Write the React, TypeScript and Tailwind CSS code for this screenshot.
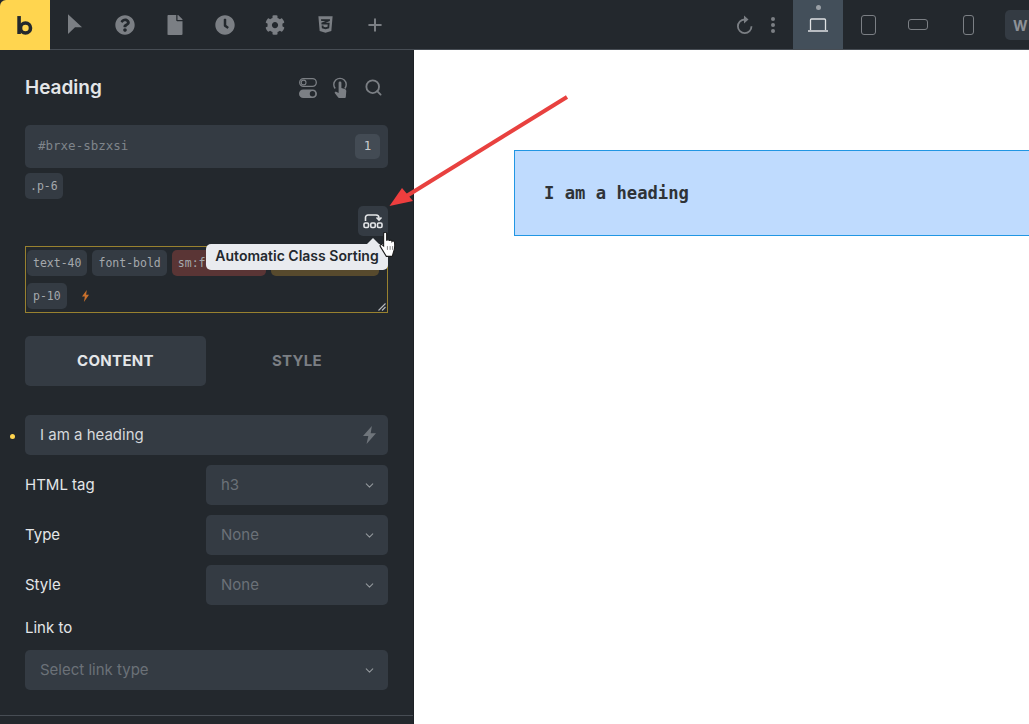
import { ChevronDown, Plus, Search } from 'lucide-react';
import { FaClock, FaCog, FaCss3Alt, FaFile, FaQuestionCircle } from 'react-icons/fa';

const inter = { fontFamily: 'Inter, sans-serif' };

const TopIcon = ({ children }: { children: React.ReactNode }) => (
    <div className="w-[50px] h-[49px] flex items-center justify-center text-[#7b7f84]">{children}</div>
);

const Chip = ({ label, className }: { label: string; className?: string }) => (
    <span className={`h-[26px] px-[6px] pt-[1px] rounded-[5px] flex items-center whitespace-nowrap text-[11.5px] text-[#a4a8ac] font-['DejaVu_Sans_Mono',monospace] ${className ?? 'bg-[#343b43]'}`}>
        {label}
    </span>
);

const SelectRow = ({ label, value }: { label: string; value: string }) => (
    <div className="flex items-center h-10">
        <span className="w-[181px] text-[15px] text-[#e4e6e8]">{label}</span>
        <SelectBox value={value} className="w-[182px]" />
    </div>
);

const SelectBox = ({ value, className }: { value: string; className: string }) => (
    <div className={`h-10 rounded-[5px] bg-[#343b43] flex items-center justify-between pl-[15px] pr-3 ${className}`}>
        <span className="text-[15px] text-[#6b7178]">{value}</span>
        <ChevronDown size={13} strokeWidth={2} className="text-[#92979c]" />
    </div>
);

const Bolt = ({ className }: { className: string }) => (
    <svg viewBox="1.500 0 11 20" preserveAspectRatio="none" className={className} fill="currentColor">
        <path d="M9 0 1.500 11H6L4.500 20 12.500 8H8z" />
    </svg>
);

export default function App() {
    return (
        <div className="relative h-screen w-full overflow-hidden bg-white flex flex-col" style={inter}>
            {/* Top bar */}
            <header className="h-[50px] shrink-0 bg-[#23282d] border-b border-[#474d54] flex items-start">
                <div className="w-[50px] h-[50px] bg-[#ffd54f] rounded-tl-[6px] flex items-center justify-center">
                    <svg viewBox="0 0 18 20" className="w-[17px] h-[19px] text-[#23282d]" fill="none" stroke="currentColor" strokeWidth="3.800">
                        <path d="M2.200 0v19" />
                        <circle cx="9" cy="12.600" r="5.300" />
                    </svg>
                </div>
                <TopIcon>
                    <svg viewBox="0 0 16 22" className="w-[15px] h-[21px]" fill="currentColor"><path d="M0 0 15 14H7.500L0 21z" /></svg>
                </TopIcon>
                <TopIcon><FaQuestionCircle size={20} /></TopIcon>
                <TopIcon><FaFile size={20} /></TopIcon>
                <TopIcon><FaClock size={20} /></TopIcon>
                <TopIcon><FaCog size={20} /></TopIcon>
                <TopIcon><FaCss3Alt size={19} /></TopIcon>
                <TopIcon><Plus size={20} strokeWidth={2.400} /></TopIcon>

                <div className="ml-auto flex items-start">
                    <div className="h-[49px] flex items-center text-[#7b7f84]">
                        <svg viewBox="0 0 18 20" className="w-[18px] h-[20px] mr-[17px]" fill="none" stroke="currentColor" strokeWidth="1.800">
                            <path d="M8.500 4.500a6.800 6.800 0 1 0 7 6.800" />
                            <path d="M8 .5 12.500 4.500 8 8.500z" fill="currentColor" stroke="none" />
                        </svg>
                        <div className="flex flex-col gap-[2px] mr-[18px]">
                            <span className="w-1 h-1 rounded-full bg-[#7b7f84]" />
                            <span className="w-1 h-1 rounded-full bg-[#7b7f84]" />
                            <span className="w-1 h-1 rounded-full bg-[#7b7f84]" />
                        </div>
                    </div>
                    <div className="relative w-[50px] h-[49px] bg-[#434f5a] flex items-center justify-center">
                        <span className="absolute top-[5px] left-[23px] w-[5px] h-[5px] rounded-full bg-[#9aa0a6]" />
                        <svg viewBox="0 0 20 14" className="w-5 h-[14px]" fill="none" stroke="#dfe1e3" strokeWidth="1.300">
                            <path d="M2.500 12V2a1 1 0 0 1 1-1h13a1 1 0 0 1 1 1v10M0 13h20" />
                        </svg>
                    </div>
                    <div className="w-[50px] h-[49px] flex items-center justify-center">
                        <div className="w-[15px] h-[20px] rounded-[3px] border-[1.5px] border-[#7b7f84]" />
                    </div>
                    <div className="w-[50px] h-[49px] flex items-center justify-center">
                        <div className="w-[20px] h-[11px] rounded-[3px] border-[1.5px] border-[#7b7f84]" />
                    </div>
                    <div className="w-[50px] h-[49px] flex items-center justify-center">
                        <div className="w-[11px] h-[20px] rounded-[3px] border-[1.5px] border-[#7b7f84]" />
                    </div>
                    <div className="ml-[12px] mt-[10px] w-[24px] h-[30px] rounded-l-[5px] bg-[#343b43] flex items-center pl-2 overflow-hidden">
                        <span className="text-[14px] font-bold text-[#8d9197]">W</span>
                    </div>
                </div>
            </header>

            <div className="flex-1 flex min-h-0">
                {/* Panel */}
                <aside className="w-[414px] shrink-0 bg-[#23282d] border-r border-[#1d2125] flex flex-col">
                    <div className="px-[25px]">
                        <div className="h-[75px] flex items-center justify-between">
                            <span className="text-[19px] font-semibold text-[#e4e6e8] pt-[2px]">Heading</span>
                            <div className="flex items-center text-[#7b7f84] pr-[5px]">
                                <svg viewBox="0 0 18 20" className="w-[18px] h-[20px] mr-[16px]">
                                    <rect x="0.700" y="0.700" width="16.600" height="7.600" rx="3.800" fill="none" stroke="currentColor" strokeWidth="1.300" />
                                    <circle cx="4.600" cy="4.500" r="2.400" fill="none" stroke="currentColor" strokeWidth="1.100" />
                                    <rect x="0" y="11.500" width="18" height="8.500" rx="4.250" fill="currentColor" />
                                    <circle cx="13.500" cy="15.750" r="2.700" fill="#23282d" />
                                </svg>
                                <svg viewBox="0 0 14 21" className="w-[14px] h-[21px] mr-[17px]" fill="none" stroke="currentColor" strokeWidth="1.400">
                                    <path d="M2.200 11.500A6.200 6.200 0 1 1 11.800 11.500" />
                                    <path fill="currentColor" stroke="none" d="M5.600 5.800a1.400 1.400 0 0 1 2.800 0V11l3.400 1a2 2 0 0 1 1.500 2l-.5 6a1 1 0 0 1-1 1H6a1 1 0 0 1-.8-.4L1.500 15.800l1.200-1.200 2.900 1.500z" />
                                </svg>
                                <Search size={19} strokeWidth={2.300} />
                            </div>
                        </div>

                        <div className="h-[43px] rounded-[5px] bg-[#343b43] flex items-center justify-between pl-[13px] pr-2">
                            <span className="text-[12.500px] text-[#7f858b] font-['DejaVu_Sans_Mono',monospace]">#brxe-sbzxsi</span>
                            <span className="w-[25px] h-[25px] rounded-[5px] bg-[#434b54] flex items-center justify-center text-[12.500px] text-[#c9ccd0] font-['DejaVu_Sans_Mono',monospace]">1</span>
                        </div>

                        <div className="mt-[5px] flex">
                            <Chip label=".p-6" className="bg-[#343b43] !px-[5px]" />
                        </div>

                        <div className="relative mt-[7px] h-[30px] flex justify-end">
                            <div className="w-[30px] h-[30px] rounded-[5px] bg-[#343b43] flex items-center justify-center text-[#e4e6e8]">
                                <svg viewBox="0 0 20 18" className="w-5 h-[18px]" fill="none" stroke="currentColor" strokeWidth="1.600">
                                    <path d="M2.500 9V5.500a2.500 2.500 0 0 1 2.500-2.500h8a3 3 0 0 1 3 3v1" />
                                    <path d="M13.500 5.500 16 8l2.500-2.500" />
                                    <rect x="1" y="11" width="4.500" height="4.500" rx="1.200" />
                                    <rect x="7.750" y="11" width="4.500" height="4.500" rx="1.200" />
                                    <rect x="14.500" y="11" width="4.500" height="4.500" rx="1.200" />
                                </svg>
                            </div>
                            {/* Tooltip */}
                            <div className="absolute z-10 top-[38px] right-0 h-[26px] w-[182px] pb-[3px] rounded-[5px] bg-[#e9ebef] flex items-center justify-center text-[14px] font-semibold text-[#23282d] whitespace-nowrap">
                                Automatic Class Sorting
                                <span className="absolute -top-[6px] right-[9px] w-0 h-0 border-x-[6px] border-x-transparent border-b-[6px] border-b-[#e9ebef]" />
                            </div>
                        </div>

                        <div className="relative mt-[10px] h-[67px] border border-[#98812f] px-[1px] pt-[3px] flex flex-wrap content-start gap-x-[5px] gap-y-[7px]">
                            <Chip label="text-40" />
                            <Chip label="font-bold" />
                            <Chip label="sm:font-medium" className="bg-[#5a3535] w-[94px] overflow-hidden" />
                            <Chip label="md:text-3xl" className="bg-[#574a2d] w-[108px] overflow-hidden" />
                            <Chip label="p-10" />
                            <div className="h-[26px] flex items-center ml-[10px]">
                                <Bolt className="w-[7px] h-[12px] text-[#c9702c]" />
                            </div>
                            <svg viewBox="0 0 8 8" className="absolute right-[1px] bottom-[1px] w-2 h-2" stroke="#b9bcc0" strokeWidth="1.100">
                                <path d="M0.500 7.500 7.500 0.500M4 7.500 7.500 4" />
                            </svg>
                        </div>

                        <div className="mt-[23px] h-[50px] flex text-[15px] font-bold tracking-[0.3px]">
                            <div className="w-[181px] rounded-[5px] bg-[#343b43] flex items-center justify-center text-[#e4e6e8]">CONTENT</div>
                            <div className="flex-1 flex items-center justify-center text-[#7b7f84]">STYLE</div>
                        </div>

                        <div className="relative mt-[29px] h-10 rounded-[5px] bg-[#343b43] flex items-center justify-between pl-[15px] pr-3">
                            <span className="absolute -left-[15px] top-[19px] w-[5px] h-[5px] rounded-full bg-[#ffd54f]" />
                            <span className="text-[15px] text-[#d6d9dc]">I am a heading</span>
                            <Bolt className="w-[13px] h-[18px] text-[#6f757b]" />
                        </div>

                        <div className="mt-[10px] flex flex-col gap-[10px]">
                            <SelectRow label="HTML tag" value="h3" />
                            <SelectRow label="Type" value="None" />
                            <SelectRow label="Style" value="None" />
                        </div>

                        <div className="mt-[13px] text-[15px] leading-[20px] text-[#e4e6e8]">Link to</div>
                        <SelectBox value="Select link type" className="mt-[12px] w-full" />
                    </div>
                    <div className="mt-[25px] border-t border-[#474d54]" />
                </aside>

                {/* Canvas */}
                <main className="flex-1 min-w-0 overflow-hidden bg-white pl-[100px] pt-[100px]">
                    <div className="w-[700px] h-[86px] border border-[#2196e3] bg-[#bfdbfe] flex items-center pl-[29px] pt-[2px]">
                        <span className="text-[17.2px] font-bold text-[#2f3337] font-['DejaVu_Sans_Mono',monospace]">I am a heading</span>
                    </div>
                </main>
            </div>

            {/* Annotation arrow */}
            <svg className="absolute left-[380px] top-[90px] w-[195px] h-[125px] z-20 pointer-events-none" viewBox="380 90 195 125">
                <path d="M567 97 405 197" stroke="#e8413f" strokeWidth="4" />
                <path d="M389.500 206 402 188 413 201z" fill="#ee3e3e" />
            </svg>

            {/* Hand cursor */}
            <svg className="absolute left-[379px] top-[232px] w-[19px] h-[26px] z-30 pointer-events-none" viewBox="0 0 17 24">
                <path d="M4 1.500a1.400 1.400 0 0 1 2.800 0V8c.2-1.200 2.300-1.200 2.500.2.300-1 2.200-.9 2.400.5.400-.8 2.100-.5 2.300.8.500 3.200.2 6.600-1 9.300L12 22.500H6.500L1 13.500c-.8-1.200.3-2.500 1.500-1.800l1.500 1.300z" fill="#fff" stroke="#1a1a1a" strokeWidth="1" />
                <path d="M7.500 13v3.500M10 13v3.500M12.300 13v3.500" stroke="#777" strokeWidth="0.800" />
            </svg>
        </div>
    );
}
